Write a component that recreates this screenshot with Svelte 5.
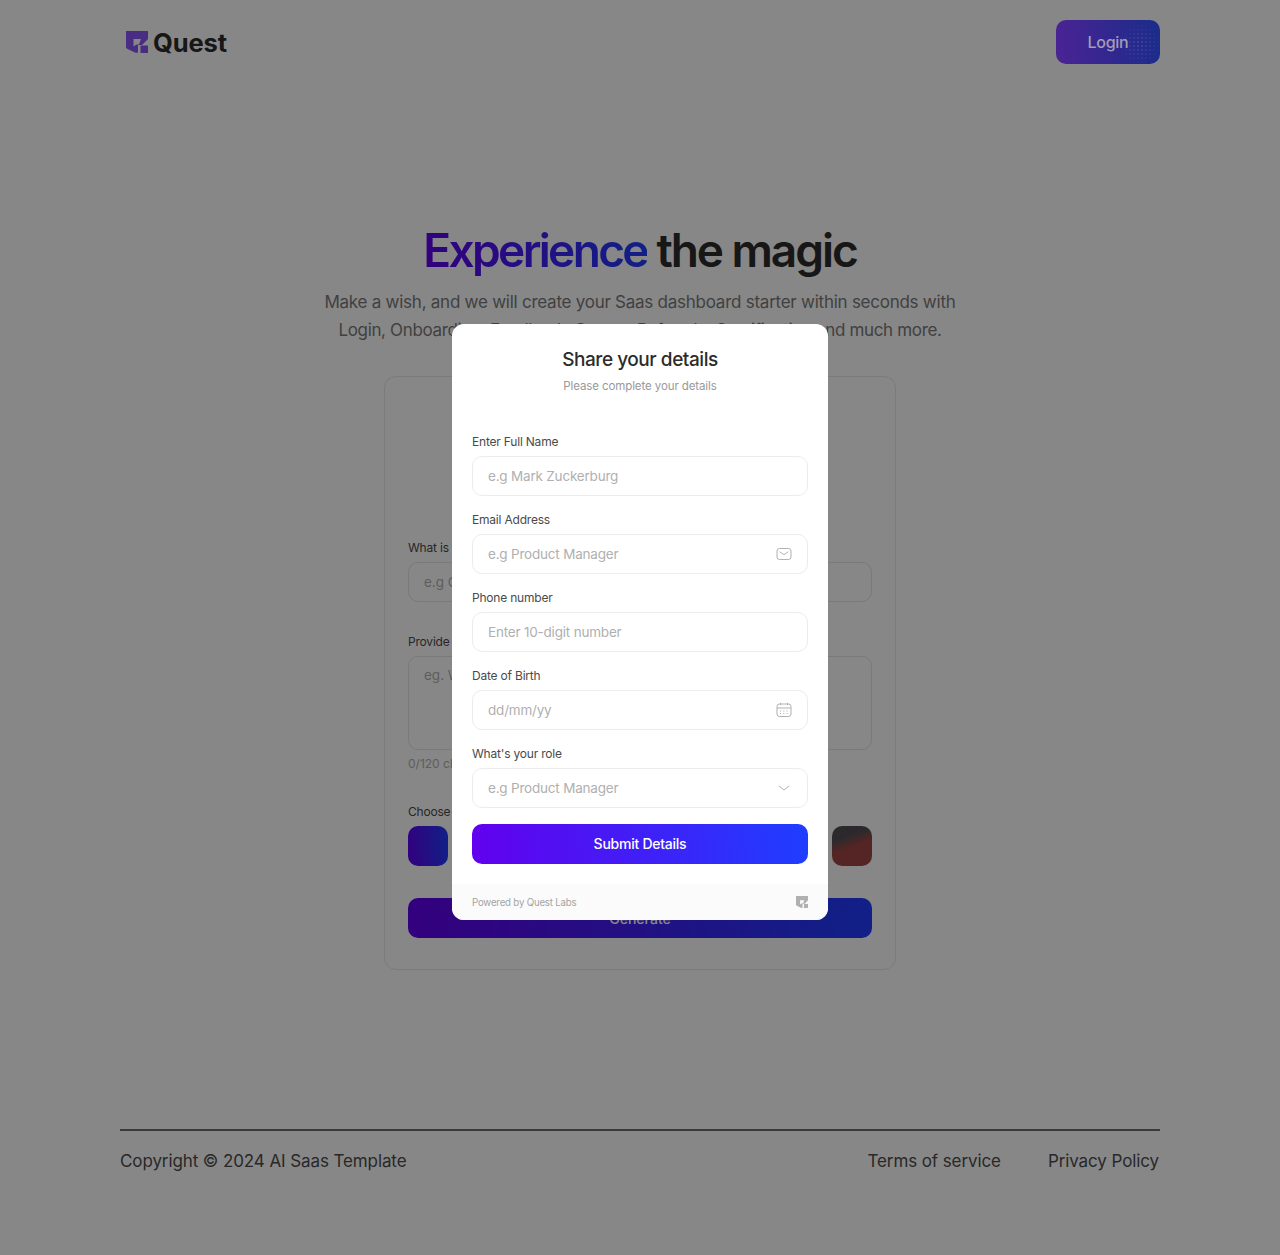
<script>
  const fields = [
    { label: 'Enter Full Name', placeholder: 'e.g Mark Zuckerburg', icon: '' },
    { label: 'Email Address', placeholder: 'e.g Product Manager', icon: 'mail' },
    { label: 'Phone number', placeholder: 'Enter 10-digit number', icon: '' },
    { label: 'Date of Birth', placeholder: 'dd/mm/yy', icon: 'calendar' },
    { label: "What's your role", placeholder: 'e.g Product Manager', icon: 'chevron' }
  ];
  const swatches = ['a', 'b', 'c', 'd', 'e', 'f'];
  const mark = 'M0 0H22V8L16 14H12V21.500C11 22 10 21.800 9 21.400L1.500 18C.5 17.500 0 16.800 0 16ZM7.500 8V15.500L10.500 13.500H13L15 8Z';
</script>

<div class="page">
  <header class="header">
    <div class="brand">
      <svg class="logo" viewBox="0 0 22 22" width="22" height="22" aria-hidden="true">
        <path d={mark} fill="#8a55f5" fill-rule="evenodd"/>
        <rect x="14.500" y="14.500" width="7.500" height="7.500" fill="#8a55f5"/>
      </svg>
      <span class="word">Quest</span>
    </div>
    <button class="login">Login</button>
  </header>

  <main class="main">
    <h1 class="title"><span class="grad">Experience</span> the magic</h1>
    <p class="sub">Make a wish, and we will create your Saas dashboard starter within seconds with<br /><span class="line2">Login, Onboarding, Feedback, Survey, Referrals, Gamification and much more.</span></p>

    <section class="card">
      <div class="cfield first">
        <label class="clabel" for="c1">What is the name of your Saas?</label>
        <input id="c1" class="cinput" placeholder="e.g Quest Labs" />
      </div>
      <div class="cfield">
        <label class="clabel" for="c2">Provide a short description</label>
        <textarea id="c2" class="carea" placeholder="eg. We help Saas teams grow"></textarea>
        <span class="hint">0/120 characters</span>
      </div>
      <div class="cfield choose">
        <span class="clabel">Choose a theme</span>
        <div class="swatches">
          {#each swatches as s}
            <span class="swatch {s}"></span>
          {/each}
        </div>
      </div>
      <button class="generate">Generate</button>
    </section>
  </main>

  <footer class="footer">
    <span>Copyright © 2024 AI Saas Template</span>
    <nav class="links"><span>Terms of service</span><span>Privacy Policy</span></nav>
  </footer>

  <div class="overlay">
    <div class="modal">
      <div class="body">
        <h2 class="mtitle">Share your details</h2>
        <p class="msub">Please complete your details</p>
        <div class="fields">
          {#each fields as f, i}
            <div class="field">
              <label class="label" for={'f' + i}>{f.label}</label>
              <div class="inputwrap">
                <input id={'f' + i} class="input" placeholder={f.placeholder} />
                {#if f.icon === 'mail'}
                  <svg class="icon" viewBox="0 0 16 16" width="16" height="16" fill="none" stroke="#b0b0b0" stroke-width="1" aria-hidden="true"><rect x="1" y="2.500" width="14" height="11" rx="2.500"/><path d="M4 6l4 2.600L12 6" stroke-linecap="round" stroke-linejoin="round"/></svg>
                {:else if f.icon === 'calendar'}
                  <svg class="icon" viewBox="0 0 16 16" width="16" height="16" fill="none" stroke="#b0b0b0" stroke-width="1" aria-hidden="true"><rect x="1" y="2" width="14" height="12.500" rx="2.500"/><path d="M1 6h14M4.500 .8v2.400M11.500 .8v2.400"/><path d="M4 9h1.500M7.300 9h1.500M10.500 9H12M4 11.500h1.500M7.300 11.500h1.500M10.500 11.500H12" stroke-dasharray="1 .6"/></svg>
                {:else if f.icon === 'chevron'}
                  <svg class="icon" viewBox="0 0 16 16" width="16" height="16" fill="none" stroke="#b0b0b0" stroke-width="1" aria-hidden="true"><path d="M3 6l5 4 5-4" stroke-linecap="round" stroke-linejoin="round"/></svg>
                {/if}
              </div>
            </div>
          {/each}
        </div>
        <button class="submit">Submit Details</button>
      </div>
      <div class="powered">
        <span>Powered by Quest Labs</span>
        <svg viewBox="0 0 22 22" width="12" height="12" aria-hidden="true">
          <path d={mark} fill="#b0b0b0" fill-rule="evenodd"/>
          <rect x="14.500" y="14.500" width="7.500" height="7.500" fill="#b0b0b0"/>
        </svg>
      </div>
    </div>
  </div>
</div>

<style>
  :global(body) {
    margin: 0;
    background: #fff;
  }
  .page {
    position: relative;
    height: 1255px;
    font-family: Inter, "Noto Sans", sans-serif;
    color: #2c2c2c;
    overflow: hidden;
  }
  .header {
    display: flex;
    justify-content: space-between;
    align-items: center;
    padding: 20px 120px;
  }
  .brand {
    display: flex;
    align-items: center;
    gap: 5px;
    padding-left: 6px;
  }
  .word {
    font-size: 25.5px;
    font-weight: 700;
    letter-spacing: -0.1px;
    color: #2c2c2c;
  }
  .login {
    position: relative;
    z-index: 2;
    width: 104px;
    height: 44px;
    border: 0;
    border-radius: 10px;
    background: linear-gradient(84deg, #4b2394, #1a2c8a);
    color: #a39cb8;
    font: 500 16px/24px Inter, sans-serif;
    letter-spacing: -0.3px;
    overflow: hidden;
  }
  .login::after {
    content: "";
    position: absolute;
    inset: 0 0 0 50%;
    background-image: radial-gradient(circle, rgba(255, 255, 255, 0.2) 0.5px, transparent 1px);
    background-size: 4px 4px;
    -webkit-mask-image: radial-gradient(circle at 62% 55%, #000 0, transparent 55%);
    mask-image: radial-gradient(circle at 62% 55%, #000 0, transparent 55%);
  }
  .main {
    display: flex;
    flex-direction: column;
    align-items: center;
    padding-top: 138px;
  }
  .title {
    margin: 0;
    font-size: 46px;
    line-height: 56px;
    font-weight: 600;
    letter-spacing: -2.05px;
    color: #2c2c2c;
  }
  .grad {
    background: linear-gradient(84deg, #6200ee, #1f3eff);
    -webkit-background-clip: text;
    background-clip: text;
    color: transparent;
    letter-spacing: -2.65px;
  }
  .sub {
    margin: 10px 0 0;
    font-size: 17px;
    line-height: 28px;
    text-align: center;
    letter-spacing: -0.25px;
    color: #7a7a7a;
  }
  .line2 {
    letter-spacing: -0.35px;
  }
  .card {
    box-sizing: border-box;
    width: 512px;
    height: 594px;
    margin-top: 32px;
    padding: 0 23px;
    border: 1px solid #e8e8e8;
    border-radius: 12px;
    display: flex;
    flex-direction: column;
    background: #fff;
  }
  .cfield {
    display: flex;
    flex-direction: column;
    gap: 6px;
    margin-top: 32px;
  }
  .first {
    margin-top: 163px;
  }
  .clabel {
    font-size: 12px;
    line-height: 16px;
    color: #4a4a4a;
    letter-spacing: -0.2px;
  }
  .cinput,
  .carea {
    box-sizing: border-box;
    width: 100%;
    border: 1px solid #e6e6e6;
    border-radius: 10px;
    padding: 0 15px;
    font: 13.5px Inter, sans-serif;
    outline: 0;
    background: #fff;
  }
  .cinput {
    height: 40px;
  }
  .carea {
    height: 94px;
    padding-top: 10px;
    resize: none;
  }
  .cinput::placeholder,
  .carea::placeholder {
    color: #b0b0b0;
  }
  .hint {
    font-size: 12px;
    line-height: 16px;
    color: #b0b0b0;
  }
  .swatches {
    display: flex;
    justify-content: space-between;
  }
  .swatch {
    width: 40px;
    height: 40px;
    border-radius: 10px;
    background: linear-gradient(84deg, #6200ee, #1f3eff);
  }
  .swatch.f {
    background: linear-gradient(160deg, #544f54 28%, #a04646 52%);
  }
  .generate {
    height: 40px;
    margin-top: 32px;
    border: 0;
    border-radius: 10px;
    background: linear-gradient(84deg, #6200ee, #1f3eff);
    color: #fff;
    font: 500 14px Inter, sans-serif;
  }
  .footer {
    box-sizing: border-box;
    display: flex;
    justify-content: space-between;
    align-items: center;
    margin: 159px 120px 0;
    padding-top: 19px;
    border-top: 2px solid #6f6f6f;
    font-size: 17px;
    line-height: 22px;
    letter-spacing: -0.1px;
    color: #4d4d4d;
  }
  .links {
    display: flex;
    gap: 47px;
    padding-right: 1px;
  }
  .overlay {
    position: absolute;
    inset: 0;
    background: rgba(0, 0, 0, 0.47);
    display: flex;
    justify-content: center;
    align-items: flex-start;
    padding-top: 324px;
    box-sizing: border-box;
  }
  .modal {
    width: 376px;
    height: 596px;
    background: #fff;
    border-radius: 12px;
    overflow: hidden;
    display: flex;
    flex-direction: column;
  }
  .body {
    flex: 1;
    padding: 22px 20px 0;
    display: flex;
    flex-direction: column;
  }
  .mtitle {
    margin: 0;
    font-size: 19px;
    line-height: 28px;
    font-weight: 500;
    letter-spacing: -0.45px;
    text-align: center;
    color: #2c2c2c;
  }
  .msub {
    margin: 4px 0 0;
    font-size: 11.5px;
    line-height: 16px;
    letter-spacing: -0.1px;
    text-align: center;
    color: #999;
  }
  .fields {
    margin-top: 40px;
    display: flex;
    flex-direction: column;
    gap: 16px;
  }
  .field {
    display: flex;
    flex-direction: column;
    gap: 6px;
  }
  .label {
    font-size: 12px;
    line-height: 16px;
    letter-spacing: -0.2px;
    color: #4a4a4a;
  }
  .inputwrap {
    display: flex;
    align-items: center;
    height: 40px;
    box-sizing: border-box;
    border: 1px solid #ececec;
    border-radius: 10px;
    padding: 0 15px;
  }
  .input {
    flex: 1;
    min-width: 0;
    border: 0;
    padding: 0 0 1px;
    outline: 0;
    font: 13.5px Inter, sans-serif;
    letter-spacing: -0.2px;
    background: transparent;
  }
  .input::placeholder {
    color: #b0b0b0;
    opacity: 1;
  }
  .icon {
    flex: none;
  }
  .submit {
    height: 40px;
    margin-top: 16px;
    border: 0;
    border-radius: 10px;
    background: linear-gradient(84deg, #6200ee, #1f3eff);
    color: #fff;
    font: 500 14px/20px Inter, sans-serif;
    letter-spacing: -0.25px;
  }
  .powered {
    flex: none;
    height: 36px;
    box-sizing: border-box;
    padding: 0 20px;
    display: flex;
    align-items: center;
    justify-content: space-between;
    background: #fbfbfb;
    font-size: 9.7px;
    letter-spacing: -0.2px;
    color: #a3a3a3;
  }
</style>
